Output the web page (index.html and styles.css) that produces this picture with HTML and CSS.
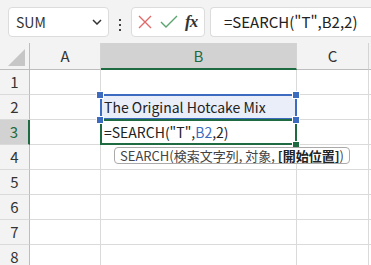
FILE: index.html
```html
<!DOCTYPE html>
<html lang="ja">
<head>
<meta charset="utf-8">
<title>SEARCH</title>
<link rel="stylesheet" href="styles.css">
</head>
<body>
	<div class="toolbar">
		<div class="namebox">
			<span>SUM</span>
			<svg class="chev" width="10" height="6" viewBox="0 0 10 6"><path d="M1 1l4 4 4-4" fill="none" stroke="#333" stroke-width="1.5"/></svg>
		</div>
		<div class="dots"><i></i><i></i><i></i></div>
		<div class="btns">
			<svg width="16" height="16" viewBox="0 0 16 16"><path d="M2 2l12 12M14 2L2 14" stroke="#e06a6a" stroke-width="1.4"/></svg>
			<svg width="18" height="16" viewBox="0 0 18 16"><path d="M1 8l5 5L17 2" fill="none" stroke="#5aa46e" stroke-width="1.4"/></svg>
			<span class="fx">fx</span>
		</div>
		<div class="formula">=SEARCH("T",B2,2)</div>
	</div>

	<div class="sheet">
		<div class="hd corner"><b></b></div>
		<div class="hd">A</div>
		<div class="hd sel-col">B</div>
		<div class="hd">C</div>
		<div class="hd end"></div>

		<div class="rh">1</div><div class="c"></div><div class="c"></div><div class="c"></div><div class="c end"></div>
		<div class="rh">2</div><div class="c"></div><div class="c ref">The Original Hotcake Mix</div><div class="c"></div><div class="c end"></div>
		<div class="rh sel-row">3</div><div class="c"></div><div class="c active">=SEARCH("T",<span class="blue">B2</span>,2)</div><div class="c"></div><div class="c end"></div>
		<div class="rh">4</div><div class="c"></div><div class="c"></div><div class="c"></div><div class="c end"></div>
		<div class="rh">5</div><div class="c"></div><div class="c"></div><div class="c"></div><div class="c end"></div>
		<div class="rh">6</div><div class="c"></div><div class="c"></div><div class="c"></div><div class="c end"></div>
		<div class="rh">7</div><div class="c"></div><div class="c"></div><div class="c"></div><div class="c end"></div>
		<div class="rh">8</div><div class="c"></div><div class="c"></div><div class="c"></div><div class="c end"></div>

		<i class="handle h-tl"></i>
		<i class="handle h-bl"></i>
		<i class="handle h-tr"></i>
		<i class="handle h-br"></i>
		<i class="handle green h-gr"></i>

		<div class="tip">SEARCH(検索文字列, 対象, <b>[開始位置]</b>)</div>
	</div>
</body>
</html>
```

FILE: styles.css
```css
body{
	margin:0;
	width:371px;
	height:265px;
	overflow:hidden;
	background:#f3f3f3;
	font-family:"Noto Sans CJK JP","Noto Sans",sans-serif;
	color:#222;
}

.toolbar{
	height:43px;
	padding:7px 0 0 8px;
	box-sizing:border-box;
	display:flex;
}

.namebox{
	width:101px;
	height:30px;
	box-sizing:border-box;
	background:#fff;
	border:1px solid #dcdcdc;
	border-radius:4px;
	display:flex;
	align-items:center;
	justify-content:space-between;
	padding:0 6px 0 7px;
	font-size:14px;
	color:#333;
}

.dots{
	width:22px;
	display:flex;
	flex-direction:column;
	align-items:center;
	justify-content:center;
	gap:3px;
}
.dots i{
	width:2px;
	height:2px;
	background:#444;
}

.btns{
	width:74px;
	height:30px;
	box-sizing:border-box;
	background:#fff;
	border:1px solid #dcdcdc;
	border-radius:4px;
	display:flex;
	align-items:center;
	padding-left:5px;
	gap:7px;
}
.fx{
	font-family:"Liberation Serif",serif;
	font-style:italic;
	font-size:17px;
	font-weight:bold;
	color:#333;
	letter-spacing:-1px;
}

.formula{
	flex:1;
	margin-left:5px;
	height:30px;
	box-sizing:border-box;
	background:#fff;
	border:1px solid #dcdcdc;
	border-right:none;
	border-radius:4px 0 0 4px;
	padding-left:13px;
	font-size:15px;
	line-height:28px;
	color:#222;
}

.sheet{
	position:relative;
	display:grid;
	grid-template-columns:30px 71px 196px 72px 1fr;
	grid-template-rows:27px repeat(8,25px);
	background:#fff;
}

.hd,.rh{
	background:#f3f3f3;
	box-sizing:border-box;
	border-right:1px solid #d4d4d4;
	border-bottom:1px solid #bdbdbd;
	font-size:15px;
	line-height:16px;
	color:#333;
	display:flex;
	align-items:center;
	justify-content:center;
}
.hd.end{border-right:none;}
.corner{
	border-right:1px solid #bdbdbd;
	position:relative;
}
.corner b{
	position:absolute;
	right:4px;
	bottom:3px;
	width:0;
	height:0;
	border-left:17px solid transparent;
	border-bottom:17px solid #c6c6c6;
}
.sel-col{
	background:#d2d2d2;
	color:#1e6b41;
	border-bottom:2px solid #1e6b41;
}

.rh{
	border-right:1px solid #bdbdbd;
	border-bottom:1px solid #dadada;
}
.sel-row{
	background:#d2d2d2;
	color:#1e6b41;
	border-right:2px solid #1e6b41;
}

.c{
	box-sizing:border-box;
	border-right:1px solid #dadada;
	border-bottom:1px solid #dadada;
	font-size:14px;
	line-height:24px;
	padding-left:3px;
	white-space:nowrap;
	color:#222;
}
.c.end{border-right:none;}

.ref{
	background:#e9eef8;
	border:2px solid #3c6bbf;
	margin:-1px 0 0 -1px;
	line-height:22px;
	padding-left:2px;
}
.active{
	border:2px solid #1e6b41;
	margin:-1px 0 0 -1px;
	line-height:22px;
	padding-left:2px;
}
.blue{color:#3c6bbf;}

.handle{
	position:absolute;
	width:6px;
	height:6px;
	background:#3c6bbf;
	border:1px solid #fff;
}
.h-tl{left:96px;top:48px;}
.h-bl{left:96px;top:73px;}
.h-tr{left:292px;top:48px;}
.h-br{left:292px;top:73px;}
.handle.green{background:#1e6b41;}
.h-gr{left:292px;top:98px;}

.tip{
	position:absolute;
	left:114px;
	top:104px;
	height:17px;
	box-sizing:border-box;
	padding:0 5px;
	background:#fff;
	border:1px solid #aaa;
	border-radius:4px;
	font-size:13px;
	line-height:15px;
	color:#444;
	white-space:nowrap;
}
.tip b{color:#222;}
```
